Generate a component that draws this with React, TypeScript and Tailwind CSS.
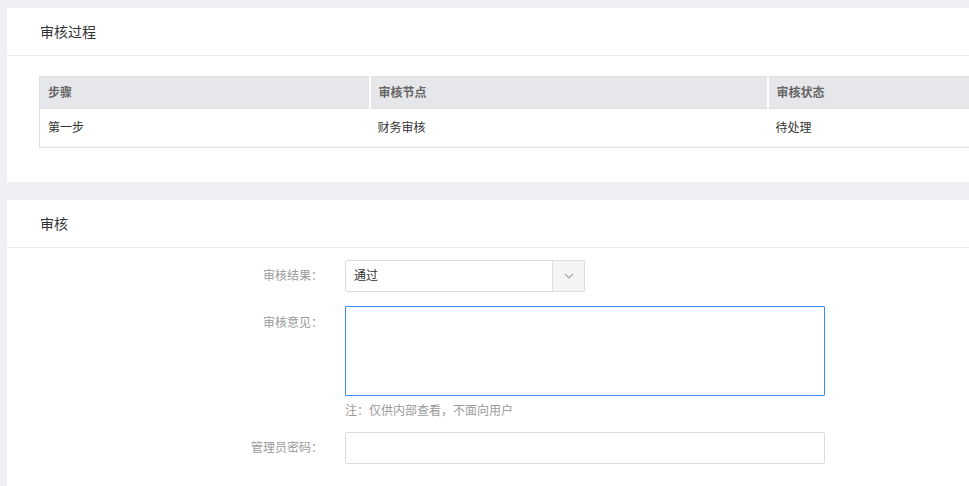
import React from 'react';

const font = { fontFamily: '"Liberation Sans", "Noto Sans CJK SC", sans-serif' };

const rows = [{ step: '第一步', node: '财务审核', status: '待处理' }];

const Card: React.FC<{ title: string; children: React.ReactNode; className?: string }> = ({ title, children, className }) => (
  <section className={`bg-white w-[1000px] ${className ?? ''}`}>
    <div className="h-[48px] flex items-center pt-[2px] px-[33px] border-b border-[#e8e8e8] text-[14px] text-[#333]">
      {title}
    </div>
    {children}
  </section>
);

const FormRow: React.FC<{ label: string; children: React.ReactNode; top?: boolean }> = ({ label, children, top }) => (
  <div className={`flex ${top ? 'items-start' : 'items-center'}`}>
    <label className={`w-[318px] pr-[2px] text-right text-[12px] text-[#9a9a9a] ${top ? 'pt-[8px]' : ''}`}>
      {label}
    </label>
    <div className="ml-[20px]">{children}</div>
  </div>
);

export default function App() {
  return (
    <div className="w-[969px] h-[486px] overflow-hidden bg-[#eff0f4] pt-[8px] pl-[7px]" style={font}>
      <Card title="审核过程">
        <div className="pt-[20px] pb-[34px] pl-[32px]">
          <table className="w-[960px] border border-[#e0e0e0] border-collapse text-[12px] table-fixed">
            <colgroup>
              <col className="w-[330px]" />
              <col className="w-[398px]" />
              <col />
            </colgroup>
            <thead>
              <tr className="bg-[#e6e7ea] h-[32px] text-[#666]">
                <th className="text-left font-semibold px-[8px] border-r-2 border-white border-b border-b-[#e0e0e0]">步骤</th>
                <th className="text-left font-semibold px-[8px] border-r-2 border-white border-b border-b-[#e0e0e0]">审核节点</th>
                <th className="text-left font-semibold px-[8px] border-b border-b-[#e0e0e0]">审核状态</th>
              </tr>
            </thead>
            <tbody>
              {rows.map(r => (
                <tr key={r.step} className="h-[39px] text-[#333]">
                  <td className="px-[8px]">{r.step}</td>
                  <td className="px-[8px]">{r.node}</td>
                  <td className="px-[8px]">{r.status}</td>
                </tr>
              ))}
            </tbody>
          </table>
        </div>
      </Card>

      <Card title="审核" className="mt-[18px] h-[400px]">
        <div className="pt-[12px] flex flex-col">
          <FormRow label="审核结果：">
            <div className="w-[240px] h-[32px] flex border border-[#dcdcdc] rounded-[2px] text-[12px] text-[#333]">
              <div className="flex-1 flex items-center px-[8px]">通过</div>
              <div className="w-[32px] flex items-center justify-center bg-[#f4f4f4] border-l border-[#dcdcdc]">
                <svg width="10" height="6" viewBox="0 0 10 6" fill="none">
                  <path d="M1 1l4 4 4-4" stroke="#aaa" strokeWidth="1.2" />
                </svg>
              </div>
            </div>
          </FormRow>
          <div className="mt-[14px]">
            <FormRow label="审核意见：" top>
              <div>
                <textarea className="block w-[480px] h-[90px] border border-[#3b8cf0] rounded-[1px] outline-none resize-none" />
                <p className="mt-[6px] text-[12px] text-[#9a9a9a]">注：仅供内部查看，不面向用户</p>
              </div>
            </FormRow>
          </div>
          <div className="mt-[12px]">
            <FormRow label="管理员密码：">
              <input type="password" className="block w-[480px] h-[32px] border border-[#dcdcdc] rounded-[2px] outline-none" />
            </FormRow>
          </div>
        </div>
      </Card>
    </div>
  );
}
